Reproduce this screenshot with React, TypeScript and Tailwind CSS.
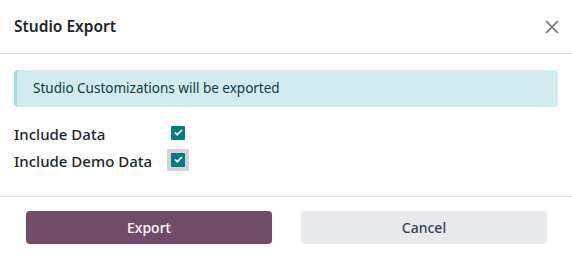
export default function App() {
  return (
    <div
      className="w-[572px] h-[257px] bg-white text-[#212529] flex flex-col"
      style={{ fontFamily: '"Noto Sans", "Open Sans", sans-serif' }}
    >
      {/* Header */}
      <div className="h-[54px] flex items-center justify-between pl-[14px] pr-[13px] border-b border-[#d8dadd]">
        <h4 className="text-[15.5px] font-semibold">Studio Export</h4>
        <button className="w-[14px] h-[14px] flex items-center justify-center">
          <svg width="14" height="14" viewBox="0 0 14 14" fill="none">
            <path d="M1 1l12 12M13 1L1 13" stroke="#6b6b6b" strokeWidth="1.5" />
          </svg>
        </button>
      </div>

      {/* Body */}
      <div className="flex-1 px-[14px] pt-[16px] border-b border-[#d8dadd]">
        <div className="h-[37px] flex items-center pl-[16px] rounded-[4px] bg-[#d1ebef] border-l-[3px] border-[#a3dbe5] text-[13.5px] text-[#0e3a44]">
          Studio Customizations will be exported
        </div>

        <div className="mt-[16px] flex flex-col gap-[5px] text-[15px] font-medium">
          <div className="flex items-center h-[22px]">
            <span className="w-[153px]">Include Data</span>
            <span className="w-[22px] h-[22px] mb-[3px] flex items-center justify-center">
              <Check />
            </span>
          </div>
          <div className="flex items-center h-[22px]">
            <span className="w-[153px]">Include Demo Data</span>
            <span className="w-[22px] h-[22px] mb-[3px] flex items-center justify-center bg-[#d9d1d8]">
              <Check />
            </span>
          </div>
        </div>
      </div>

      {/* Footer */}
      <div className="h-[60px] flex items-center pl-[26px] pr-[25px] gap-[29px] text-[14px] font-medium">
        <button className="flex-1 h-[33px] rounded-[4px] bg-[#714b67] text-white">Export</button>
        <button className="flex-1 h-[33px] rounded-[4px] bg-[#e7e9ed] text-[#374151]">Cancel</button>
      </div>
    </div>
  );
}

function Check() {
  return (
    <span className="w-[14px] h-[14px] rounded-[1px] bg-[#017e84] flex items-center justify-center">
      <svg width="9" height="7" viewBox="0 0 9 7" fill="none">
        <path d="M1 3.5l2.2 2.2L8 1" stroke="white" strokeWidth="1.7" />
      </svg>
    </span>
  );
}
